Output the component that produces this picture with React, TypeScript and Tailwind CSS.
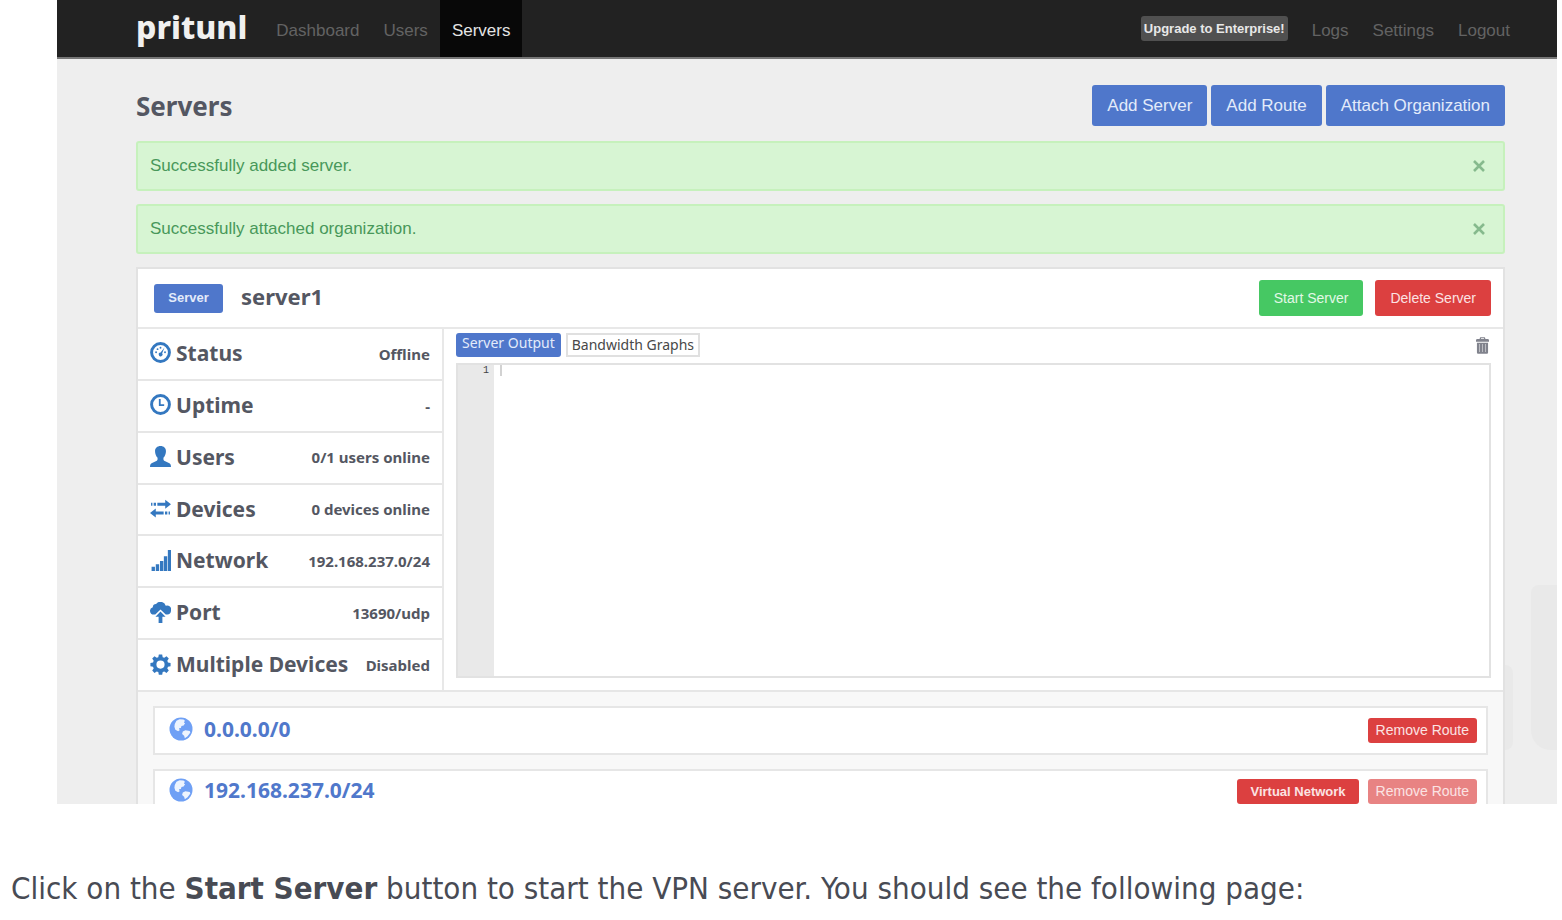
import type { ReactNode } from "react";

const heading = "font-['Noto_Sans','Open_Sans',sans-serif] font-bold text-[#545762]";

function Icon({ children, className }: { children: ReactNode; className: string }) {
  return (
    <svg viewBox="0 0 20 20" className={className} fill="currentColor" aria-hidden="true">
      {children}
    </svg>
  );
}

const icons: Record<string, ReactNode> = {
  status: (
    <>
      <circle cx="10" cy="10" r="8.500" fill="none" stroke="currentColor" strokeWidth="2.800" />
      <circle cx="5.800" cy="9.800" r="0.900" />
      <circle cx="7.200" cy="6.800" r="0.900" />
      <circle cx="10" cy="5.500" r="0.900" />
      <circle cx="14.300" cy="9.800" r="0.900" />
      <path d="M13.800 5.200l-2.200 5.600a1.800 1.800 0 1 1-1.500-.8z" />
    </>
  ),
  uptime: (
    <>
      <circle cx="10" cy="10" r="8.500" fill="none" stroke="currentColor" strokeWidth="2.800" />
      <path d="M9.300 4.800v5.800h4.200" fill="none" stroke="currentColor" strokeWidth="1.700" />
    </>
  ),
  users: (
    <path d="M10 0c3.200 0 5.200 2 5.200 5 0 2.400-.9 4.700-2.400 6.200v1.500c0 .8.4 1.400 1.200 1.700l4 1.900c1.300.6 2 1.500 2 3.700H0c0-2.200.7-3.100 2-3.700l4-1.900c.8-.3 1.200-.9 1.200-1.700v-1.500C5.700 9.700 4.800 7.400 4.800 5c0-3 2-5 5.200-5z" />
  ),
  devices: (
    <>
      <path d="M1 4.500h1.300v2.800H1zM3.500 4.500h2.200v2.800H3.500zM7 4.500h7.500V1.600L20 5.900l-5.500 4.300V7.300H7z" />
      <path d="M19 12.900h-1.300v2.800H19zM16.500 12.900h-2.200v2.800h2.200zM13 12.900H5.500V10L0 14.300l5.500 4.300v-2.900H13z" />
    </>
  ),
  network: (
    <path d="M1.500 16h3.200v4H1.500zM5.500 13.500h3.200V20H5.500zM9.500 10.500h3.200V20H9.500zM13.200 6h3.200v14h-3.200zM17 0h3v20h-3z" />
  ),
  port: (
    <>
      <path d="M7 12H3.800A3.800 3.800 0 0 1 0 8.500 3.500 3.500 0 0 1 2.700 5 3 3 0 0 1 5.800 1.800 5.300 5.300 0 0 1 15 3.500 3.900 3.900 0 0 1 20 8.300c0 2-1.500 3.700-3.500 3.700H15l-5-4.800L5 12z" />
      <path d="M10 9l4.800 5h-3v6H8.200v-6h-3z" />
    </>
  ),
  multiple: (
    <path
      fillRule="evenodd"
      d="M8.400.500h3.200l.5 2.500 1.500.6 2.100-1.400 2.200 2.200-1.400 2.100.6 1.500 2.500.500v3.200l-2.500.500-.6 1.500 1.400 2.100-2.200 2.200-2.100-1.400-1.500.6-.5 2.500H8.400l-.5-2.500-1.500-.6-2.100 1.400-2.200-2.200 1.400-2.100-.6-1.500-2.500-.500V8.500L2.900 8l.6-1.500-1.400-2.100 2.200-2.200 2.100 1.400L7.900 3zM10 6.200a3.900 3.900 0 1 0 0 7.800 3.900 3.900 0 0 0 0-7.800z"
    />
  ),
};

const stats = [
  { icon: "status", label: "Status", value: "Offline" },
  { icon: "uptime", label: "Uptime", value: "-" },
  { icon: "users", label: "Users", value: "0/1 users online" },
  { icon: "devices", label: "Devices", value: "0 devices online" },
  { icon: "network", label: "Network", value: "192.168.237.0/24" },
  { icon: "port", label: "Port", value: "13690/udp" },
  { icon: "multiple", label: "Multiple Devices", value: "Disabled" },
];

function Globe() {
  return (
    <Icon className="size-6 shrink-0 text-[#6fa0f5]">
      <circle cx="10" cy="10" r="9.600" />
      <path
        fill="#fff"
        d="M6.200 3.200l2.600-1.400 3.200.2 1.300 1.200-.9 1.300 1 .8-1.200 1.800-1.800.3-.5 1.700-1.600.3.6 1.600-1.300.9-2.300-1.200-.8-2.500.3-2.300zM11.500 12l2.200-.9 3.600.5.500 1.300-2.300 3.200-2.300 1.600-.6-2.100-1.700-1.400z"
        opacity=".88"
      />
    </Icon>
  );
}

function Alert({ children }: { children: string }) {
  return (
    <div
      role="status"
      className="mb-[13px] flex h-[50px] items-center justify-between rounded-[3px] border-2 border-[#c6f1bc] bg-[#d7f5d3] pr-[17px] pl-3 text-[17px] text-[#48985a]"
    >
      <span>{children}</span>
      <button type="button" aria-label="Close" className="text-[#86ba8d]">
        <svg viewBox="0 0 14 14" className="size-[14px]" aria-hidden="true">
          <path d="M2 2l10 10M12 2L2 12" stroke="currentColor" strokeWidth="2.600" />
        </svg>
      </button>
    </div>
  );
}

function RemoveRoute({ disabled = false }: { disabled?: boolean }) {
  return (
    <button
      type="button"
      disabled={disabled}
      className="h-[25px] rounded-[3px] bg-[#dc4040] px-2 text-[14px] text-[#fbe3e3] disabled:bg-[#e88383]"
    >
      Remove Route
    </button>
  );
}

export default function App() {
  return (
    <main className="bg-white font-['Liberation_Sans',Arial,sans-serif]">
      <div className="relative mr-[5px] ml-[57px] overflow-hidden bg-[#eeeeee]">
        <div className="absolute top-[585px] right-0 h-[165px] w-[26px] rounded-tl-lg rounded-bl-[20px] bg-[#e9e9e9]" />
        <div className="absolute top-[665px] right-[44px] h-[85px] w-4 rounded-r-lg bg-[#e9e9e9]" />
        <nav className="flex h-[59px] items-stretch border-b-2 border-[#777777] bg-[#222222] pr-[35px] pl-[79px] text-[17px] text-[#636363]">
          <a
            href="#home"
            className="flex items-center pr-[17px] pb-1 font-['Noto_Sans',sans-serif] text-[32px] leading-none font-extrabold text-[#f0f0f0]"
          >
            pritunl
          </a>
          <a href="#dashboard" className="flex items-center px-3 pt-1">Dashboard</a>
          <a href="#users" className="flex items-center px-3 pt-1">Users</a>
          <a href="#servers" className="flex items-center bg-[#080808] px-3 pt-1 text-[#e4e4e4]">Servers</a>
          <div className="ml-auto flex items-center">
            <a
              href="#upgrade"
              className="mr-3 flex h-[25px] items-center rounded-[3px] bg-[#505050] px-[3px] text-[13px] font-bold text-[#e8e8e8]"
            >
              Upgrade to Enterprise!
            </a>
            <a href="#logs" className="px-3 pt-1">Logs</a>
            <a href="#settings" className="px-3 pt-1">Settings</a>
            <a href="#logout" className="px-3 pt-1">Logout</a>
          </div>
        </nav>

        <div className="relative pr-[52px] pl-[79px]">
          <header className="flex items-center justify-between pt-[26px] pb-[15px]">
            <h1 className={`${heading} text-[26px] leading-10`}>Servers</h1>
            <div className="flex gap-1 text-[17px] text-[#e3ebfa]">
              <button type="button" className="h-[41px] rounded-[3px] bg-[#4f77cb] px-[15px]">Add Server</button>
              <button type="button" className="h-[41px] rounded-[3px] bg-[#4f77cb] px-[15px]">Add Route</button>
              <button type="button" className="h-[41px] rounded-[3px] bg-[#4f77cb] px-[15px]">Attach Organization</button>
            </div>
          </header>

          <Alert>Successfully added server.</Alert>
          <Alert>Successfully attached organization.</Alert>

          <section className="border-2 border-b-0 border-[#e2e2e2] bg-white">
            <div className="flex h-[60px] items-center border-b-2 border-[#e8e8e8] pr-3 pl-4">
              <span className="flex h-[29px] w-[69px] items-center justify-center rounded-[3px] bg-[#4f77cb] text-[13px] font-bold text-[#e3ebfa]">
                Server
              </span>
              <h2 className={`${heading} pb-1 pl-[18px] text-[22px] leading-7`}>server1</h2>
              <div className="ml-auto flex gap-3 text-[14px]">
                <button type="button" className="h-9 rounded-[3px] bg-[#46c863] px-[15px] text-[#e2f8e6]">Start Server</button>
                <button type="button" className="h-9 rounded-[3px] bg-[#dc4040] px-[15px] text-[#fbe3e3]">Delete Server</button>
              </div>
            </div>

            <div className="flex border-b-2 border-[#e6e6e6]">
              <dl className="flex w-[306px] shrink-0 flex-col border-r-2 border-[#e8e8e8]">
                {stats.map((s) => (
                  <div
                    key={s.label}
                    className="flex flex-1 items-center border-b-2 border-[#e6e6e6] px-3 pb-[2px] last:border-b-0"
                  >
                    <Icon className="mr-[5px] size-[21px] shrink-0 text-[#3478c0]">{icons[s.icon]}</Icon>
                    <dt className={`${heading} text-[21px] leading-7 whitespace-nowrap`}>{s.label}</dt>
                    <dd className={`${heading} ml-auto pt-[2px] text-[15px] whitespace-nowrap`}>{s.value}</dd>
                  </div>
                ))}
              </dl>

              <div className="min-w-0 flex-1 pt-1 pr-3 pb-3 pl-3">
                <div className="flex items-center gap-[5px] font-['Noto_Sans','Open_Sans',sans-serif] text-[14px] leading-5">
                  <button type="button" className="h-6 rounded-[3px] bg-[#4f77cb] px-[6px] pb-1 text-[#e3ebfa]">Server Output</button>
                  <button type="button" className="h-6 border-2 border-[#e0e0e0] bg-white px-1 pb-1 text-[#484848]">
                    Bandwidth Graphs
                  </button>
                  <button type="button" aria-label="Clear output" className="mr-[2px] ml-auto text-[#81838d]">
                    <svg viewBox="0 0 14 18" className="h-[17px] w-[13px]" fill="currentColor" aria-hidden="true">
                      <path d="M4 2V1.200C4 .5 4.500 0 5.200 0h3.600C9.500 0 10 .5 10 1.200V2h2.500c.9 0 1.500.6 1.500 1.500V5H0V3.500C0 2.600.6 2 1.500 2zm1.400 0h3.200v-.8H5.400z" />
                      <path
                        fillRule="evenodd"
                        d="M1 6h12v10.500c0 .9-.6 1.500-1.500 1.500h-9C1.600 18 1 17.400 1 16.500zm2.500 1.500v8.500h.5V7.500zm3.200 0v8.500h.5V7.500zm3.200 0v8.500h.5V7.500z"
                      />
                    </svg>
                  </button>
                </div>
                <div className="mt-[6px] flex h-[315px] border-2 border-[#e2e2e2]">
                  <div className="w-9 bg-[#e9e9e9] pr-[5px] text-right font-['Liberation_Mono',monospace] text-[10px] leading-[12px] text-[#444444]">
                    1
                  </div>
                  <textarea
                    aria-label="Server output"
                    readOnly
                    className="flex-1 resize-none border-0 bg-transparent bg-[linear-gradient(#d2d2d2,#d2d2d2)] bg-[length:2px_11px] bg-[position:6px_0] bg-no-repeat outline-none"
                  />
                </div>
              </div>
            </div>

            <ul className="bg-[#f8f8f8] pt-[14px] pr-[15px] pl-[15px]">
              <li className="mb-[14px] flex h-[49px] items-center border-2 border-[#e6e6e6] bg-white pr-[9px] pl-[14px]">
                <div className="flex items-center pb-1">
                  <Globe />
                  <span className="pl-[11px] font-['Noto_Sans','Open_Sans',sans-serif] text-[21px] leading-7 font-bold text-[#5078cb]">
                    0.0.0.0/0
                  </span>
                </div>
                <div className="ml-auto flex">
                  <RemoveRoute />
                </div>
              </li>
              <li className="flex items-end border-2 border-b-0 border-[#e6e6e6] bg-white pt-[5px] pr-[9px] pl-[14px]">
                <div className="flex items-center">
                  <Globe />
                  <span className="pl-[11px] font-['Noto_Sans','Open_Sans',sans-serif] text-[21px] leading-7 font-bold text-[#5078cb]">
                    192.168.237.0/24
                  </span>
                </div>
                <div className="ml-auto flex gap-[9px]">
                  <span className="flex h-[25px] items-center rounded-[3px] bg-[#dc4040] px-[13px] text-[13px] font-bold text-[#fbe3e3]">
                    Virtual Network
                  </span>
                  <RemoveRoute disabled />
                </div>
              </li>
            </ul>
          </section>
        </div>
      </div>

      <p className="px-[11px] pt-16 pb-3 font-['DejaVu_Sans_Condensed','DejaVu_Sans',sans-serif] text-[31px] leading-10 text-[#484b54]">
        Click on the <strong>Start Server</strong> button to start the VPN server. You should see the following page:
      </p>
    </main>
  );
}
